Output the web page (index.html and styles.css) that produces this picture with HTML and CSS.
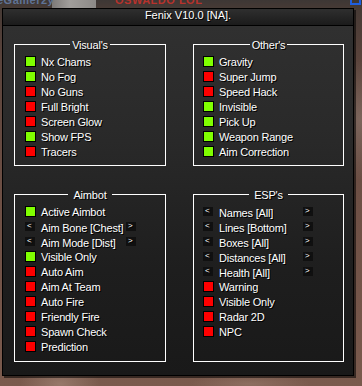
FILE: index.html
```html
<!DOCTYPE html>
<html lang="en">
<head>
<meta charset="utf-8">
<title>Fenix V10.0</title>
<link rel="stylesheet" href="styles.css">
</head>
<body>
<div class="scene">
  <div class="hud">
    <span class="hud-stone"></span>
    <span class="hud-name hud-blue">eGamer2y</span>
    <span class="hud-name hud-red">OSWALDO LOL</span>
    <span class="hud-icon"></span>
  </div>
  <div class="window">
    <div class="titlebar">Fenix V10.0 [NA].</div>
    <div class="panels">
      <section class="group group-top">
        <div class="group-head"><span>Visual's</span></div>
        <div class="group-body">
          <div class="row"><i class="chk on"></i><span>Nx Chams</span></div>
          <div class="row"><i class="chk on"></i><span>No Fog</span></div>
          <div class="row"><i class="chk"></i><span>No Guns</span></div>
          <div class="row"><i class="chk"></i><span>Full Bright</span></div>
          <div class="row"><i class="chk"></i><span>Screen Glow</span></div>
          <div class="row"><i class="chk on"></i><span>Show FPS</span></div>
          <div class="row"><i class="chk"></i><span>Tracers</span></div>
        </div>
      </section>
      <section class="group group-top group-right">
        <div class="group-head"><span>Other's</span></div>
        <div class="group-body">
          <div class="row"><i class="chk on"></i><span>Gravity</span></div>
          <div class="row"><i class="chk"></i><span>Super Jump</span></div>
          <div class="row"><i class="chk"></i><span>Speed Hack</span></div>
          <div class="row"><i class="chk on"></i><span>Invisible</span></div>
          <div class="row"><i class="chk on"></i><span>Pick Up</span></div>
          <div class="row"><i class="chk on"></i><span>Weapon Range</span></div>
          <div class="row"><i class="chk on"></i><span>Aim Correction</span></div>
        </div>
      </section>
      <section class="group group-bottom group-aim">
        <div class="group-head"><span>Aimbot</span></div>
        <div class="group-body">
          <div class="row"><i class="chk on"></i><span>Active Aimbot</span></div>
          <div class="row arrow-row"><b class="arr">&lt;</b><span class="label">Aim Bone [Chest]</span><b class="arr">&gt;</b></div>
          <div class="row arrow-row"><b class="arr">&lt;</b><span class="label">Aim Mode [Dist]</span><b class="arr">&gt;</b></div>
          <div class="row"><i class="chk on"></i><span>Visible Only</span></div>
          <div class="row"><i class="chk"></i><span>Auto Aim</span></div>
          <div class="row"><i class="chk"></i><span>Aim At Team</span></div>
          <div class="row"><i class="chk"></i><span>Auto Fire</span></div>
          <div class="row"><i class="chk"></i><span>Friendly Fire</span></div>
          <div class="row"><i class="chk"></i><span>Spawn Check</span></div>
          <div class="row"><i class="chk"></i><span>Prediction</span></div>
        </div>
      </section>
      <section class="group group-bottom group-right group-esp">
        <div class="group-head"><span>ESP's</span></div>
        <div class="group-body">
          <div class="row arrow-row"><b class="arr">&lt;</b><span class="label">Names [All]</span><b class="arr">&gt;</b></div>
          <div class="row arrow-row"><b class="arr">&lt;</b><span class="label">Lines [Bottom]</span><b class="arr">&gt;</b></div>
          <div class="row arrow-row"><b class="arr">&lt;</b><span class="label">Boxes [All]</span><b class="arr">&gt;</b></div>
          <div class="row arrow-row"><b class="arr">&lt;</b><span class="label">Distances [All]</span><b class="arr">&gt;</b></div>
          <div class="row arrow-row"><b class="arr">&lt;</b><span class="label">Health [All]</span><b class="arr">&gt;</b></div>
          <div class="row"><i class="chk"></i><span>Warning</span></div>
          <div class="row"><i class="chk"></i><span>Visible Only</span></div>
          <div class="row"><i class="chk"></i><span>Radar 2D</span></div>
          <div class="row"><i class="chk"></i><span>NPC</span></div>
        </div>
      </section>
    </div>
  </div>
</div>
</body>
</html>
```
FILE: styles.css
```css
html, body {
  margin: 0;
  padding: 0;
}
body {
  width: 362px;
  height: 386px;
  overflow: hidden;
  font-family: "Liberation Sans", Arial, sans-serif;
  font-size: 11px;
  color: #fff;
}
.scene {
  position: relative;
  width: 362px;
  height: 386px;
  box-sizing: border-box;
  padding: 8px 0 0 2px;
  background:
    radial-gradient(ellipse 30px 60px at 360px 120px, rgba(150,130,120,.5), transparent),
    radial-gradient(ellipse 40px 20px at 60px 384px, rgba(170,140,125,.6), transparent),
    radial-gradient(ellipse 60px 10px at 250px 384px, rgba(160,130,115,.5), transparent),
    linear-gradient(180deg, #3d3735 0, #463a35 8px, #5b443c 60px, #6e5045 200px, #7a5a4d 386px);
}
.hud {
  position: absolute;
  left: 0;
  top: 0;
  width: 362px;
  height: 8px;
  overflow: hidden;
}
.hud-stone {
  position: absolute;
  left: 52px;
  top: 0;
  width: 44px;
  height: 8px;
  background: linear-gradient(90deg, #7d7a78, #a19e9b 40%, #8c8987);
}
.hud-name {
  position: absolute;
  top: -6px;
  font-weight: bold;
  font-size: 11px;
  line-height: 12px;
  letter-spacing: 0.5px;
}
.hud-blue {
  left: -3px;
  color: #5f7396;
}
.hud-red {
  left: 115px;
  color: #b8322c;
}
.hud-icon {
  position: absolute;
  left: 350px;
  top: -4px;
  width: 7px;
  height: 5px;
  border: 2px solid #1f5fe0;
}
.window {
  width: 352px;
  height: 368px;
  box-sizing: border-box;
  border: 1px solid #000;
  background: linear-gradient(180deg, #313131 0, #2a2a2a 120px, #1e1e1e 260px, #191919 100%);
  box-shadow: 2px 2px 0 rgba(0, 0, 0, 0.55);
  display: flex;
  flex-direction: column;
}
.titlebar {
  height: 16px;
  border-bottom: 1px solid #000;
  background: linear-gradient(180deg, #2f2f2f, #1b1b1b);
  display: flex;
  justify-content: center;
  align-items: flex-start;
  padding-left: 20px;
  line-height: 12px;
  padding-top: 0;
  box-sizing: content-box;
  text-shadow: 1px 1px 0 #000;
}
.panels {
  display: grid;
  grid-template-columns: 152px 151px;
  grid-template-rows: 127px 173px;
  column-gap: 27px;
  row-gap: 23px;
  padding: 13px 0 0 11px;
}
.group {
  display: flex;
  flex-direction: column;
  text-shadow: 1px 1px 0 #000;
  letter-spacing: -0.2px;
}
.group-head {
  display: flex;
  height: 12px;
  line-height: 12px;
}
.group-head::before,
.group-head::after {
  content: "";
  flex: 1;
  align-self: flex-end;
  height: 6px;
  border-top: 1px solid #fff;
}
.group-head::before {
  border-left: 1px solid #fff;
}
.group-head::after {
  border-right: 1px solid #fff;
}
.group-head span {
  padding: 0 2px;
}
.group-bottom .group-head span {
  padding: 0 5px;
}
.group-body {
  flex: 1;
  border: 1px solid #fff;
  border-top: 0;
  padding: 3px 0 0 10px;
}
.group-right .group-body {
  padding-left: 9px;
}
.row {
  display: flex;
  align-items: center;
  height: 15px;
  gap: 5px;
  white-space: nowrap;
}
.chk {
  display: block;
  width: 11px;
  height: 11px;
  box-sizing: border-box;
  border: 1px solid #000;
  background: #ff0000;
  flex: none;
}
.chk.on {
  background: #80ff00;
}
.arrow-row {
  gap: 0;
}
.arr {
  display: block;
  width: 10px;
  height: 9px;
  flex: none;
  box-sizing: border-box;
  background: #101010;
  font-weight: normal;
  font-size: 8px;
  line-height: 7px;
  padding-left: 2px;
  letter-spacing: 0;
}
.arrow-row .label {
  flex: 0 0 91px;
  box-sizing: border-box;
  padding: 3px 0 0 6px;
}
.group-esp .arrow-row .label {
  flex-basis: 90px;
}
```
